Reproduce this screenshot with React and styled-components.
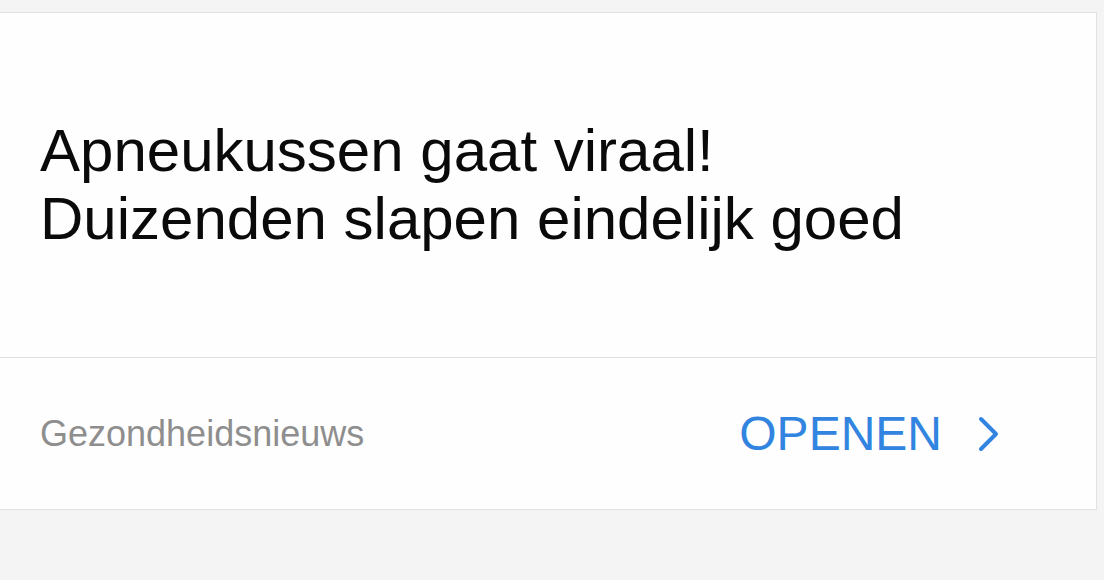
import styled, { createGlobalStyle } from "styled-components";

const GlobalStyle = createGlobalStyle`
    html, body {
        margin: 0;
        padding: 0;
        background: #f4f4f4;
        font-family: "Liberation Sans", Arial, Helvetica, sans-serif;
    }
`;

const App = () => {
    return (
        <Page>
            <GlobalStyle />
            <Card>
                <Body>
                    <Title>
                        Apneukussen gaat viraal!
                        <br />
                        Duizenden slapen eindelijk goed
                    </Title>
                </Body>
                <Footer>
                    <Source>Gezondheidsnieuws</Source>
                    <OpenLink href="#">
                        OPENEN
                        <Chevron viewBox="0 0 22 36" aria-hidden="true">
                            <path d="M3 3 L18 18 L3 33" />
                        </Chevron>
                    </OpenLink>
                </Footer>
            </Card>
        </Page>
    );
};

const Page = styled.div`
    min-height: 580px;
    padding-top: 12px;
    box-sizing: border-box;
`;

const Card = styled.div`
    width: 1097px;
    background: #fefefe;
    border: 1px solid #e2e2e2;
    border-left: none;
    box-sizing: border-box;
    display: flex;
    flex-direction: column;
`;

const Body = styled.div`
    height: 345px;
    display: flex;
    align-items: center;
    padding: 0 40px;
    border-bottom: 1px solid #e0e0e0;
    box-sizing: border-box;
`;

const Title = styled.h1`
    margin: 0;
    font-size: 60px;
    line-height: 68px;
    font-weight: normal;
    color: #0a0a0a;
`;

const Footer = styled.div`
    height: 151px;
    display: flex;
    align-items: center;
    justify-content: space-between;
    padding: 0 96px 0 40px;
    box-sizing: border-box;
`;

const Source = styled.span`
    font-size: 36px;
    color: #8e8e8e;
`;

const OpenLink = styled.a`
    display: flex;
    align-items: center;
    gap: 36px;
    font-size: 48px;
    color: #3185e0;
    text-decoration: none;
`;

const Chevron = styled.svg`
    width: 22px;
    height: 36px;
    fill: none;
    stroke: #3185e0;
    stroke-width: 4;
    stroke-linecap: round;
    stroke-linejoin: round;
`;

export default App;
